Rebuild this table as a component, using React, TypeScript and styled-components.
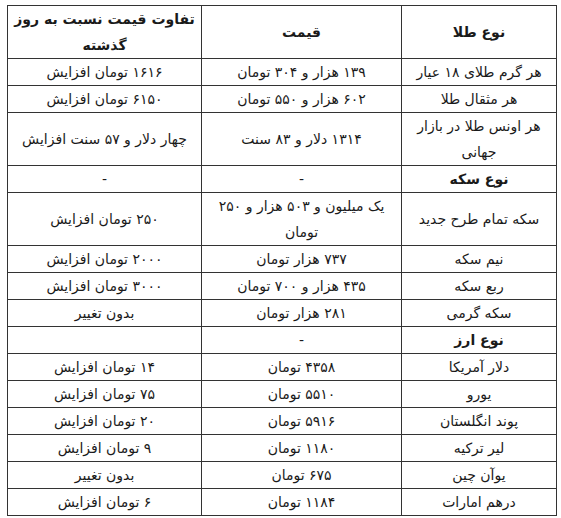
import styled, { createGlobalStyle } from 'styled-components';

const GlobalStyle = createGlobalStyle`
  body {
    margin: 0;
    background: #fff;
    font-family: "DejaVu Sans", sans-serif;
  }
`;

const Page = styled.div`
  padding: 5px 6px 0 7px;
`;

const Table = styled.table`
  direction: rtl;
  width: 549px;
  border-collapse: collapse;
  table-layout: fixed;
  color: #1a1a1a;
  font-size: 14px;
  line-height: 26px;
`;

const Col = styled.col<{ $w: number }>`
  width: ${(p) => p.$w}px;
`;

const HeadCell = styled.th`
  border: 1px solid #333;
  padding: 0 3px;
  font-weight: bold;
  text-align: center;
`;

const Cell = styled.td<{ $bold?: boolean }>`
  border: 1px solid #333;
  padding: 0 3px;
  text-align: center;
  font-weight: ${(p) => (p.$bold ? 'bold' : 'normal')};
`;

type Row = { name: string; price: string; diff: string; bold?: boolean };

const rows: Row[] = [
  { name: 'هر گرم طلای ۱۸ عیار', price: '۱۳۹ هزار و ۳۰۴ تومان', diff: '۱۶۱۶ تومان افزایش' },
  { name: 'هر مثقال طلا', price: '۶۰۲ هزار و ۵۵۰ تومان', diff: '۶۱۵۰ تومان افزایش' },
  { name: 'هر اونس طلا در بازار جهانی', price: '۱۳۱۴ دلار و ۸۳ سنت', diff: 'چهار دلار و ۵۷ سنت افزایش' },
  { name: 'نوع سکه', price: '-', diff: '-', bold: true },
  { name: 'سکه تمام طرح جدید', price: 'یک میلیون و ۵۰۳ هزار و ۲۵۰ تومان', diff: '۲۵۰ تومان افزایش' },
  { name: 'نیم سکه', price: '۷۳۷ هزار تومان', diff: '۲۰۰۰ تومان افزایش' },
  { name: 'ربع سکه', price: '۴۳۵ هزار و ۷۰۰ تومان', diff: '۳۰۰۰ تومان افزایش' },
  { name: 'سکه گرمی', price: '۲۸۱ هزار تومان', diff: 'بدون تغییر' },
  { name: 'نوع ارز', price: '-', diff: '', bold: true },
  { name: 'دلار آمریکا', price: '۴۳۵۸  تومان', diff: '۱۴ تومان افزایش' },
  { name: 'یورو', price: '۵۵۱۰ تومان', diff: '۷۵ تومان افزایش' },
  { name: 'پوند انگلستان', price: '۵۹۱۶ تومان', diff: '۲۰ تومان افزایش' },
  { name: 'لیر ترکیه', price: '۱۱۸۰ تومان', diff: '۹ تومان افزایش' },
  { name: 'یوآن چین', price: '۶۷۵ تومان', diff: 'بدون تغییر' },
  { name: 'درهم امارات', price: '۱۱۸۴ تومان', diff: '۶ تومان افزایش' },
];

export default function App() {
  return (
    <Page>
      <GlobalStyle />
      <Table>
        <colgroup>
          <Col $w={155} />
          <Col $w={200} />
          <Col $w={194} />
        </colgroup>
        <thead>
          <tr>
            <HeadCell>نوع طلا</HeadCell>
            <HeadCell>قیمت</HeadCell>
            <HeadCell>تفاوت قیمت نسبت به روز گذشته</HeadCell>
          </tr>
        </thead>
        <tbody>
          {rows.map((r) => (
            <tr key={r.name}>
              <Cell $bold={r.bold}>{r.name}</Cell>
              <Cell>{r.price}</Cell>
              <Cell>{r.diff}</Cell>
            </tr>
          ))}
        </tbody>
      </Table>
    </Page>
  );
}
